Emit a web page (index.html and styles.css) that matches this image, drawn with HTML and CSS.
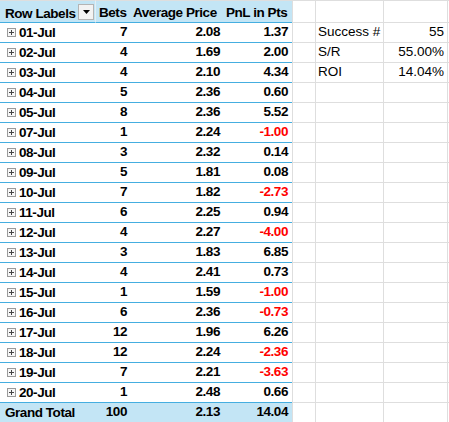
FILE: index.html
```html
<!DOCTYPE html>
<html>
<head>
<meta charset="utf-8">
<link rel="stylesheet" href="styles.css">
</head>
<body>
<div class="sheet">
  <div class="row head">
    <div class="cell a lbl"><span>Row Labels</span><span class="dd"><svg width="7" height="4" viewBox="0 0 7 4"><path d="M0 0H7L3.5 4Z" fill="#000"/></svg></span></div>
    <div class="cell b hl">Bets</div>
    <div class="cell c hl">Average Price</div>
    <div class="cell d hl">PnL in Pts</div>
    <div class="cell e"></div><div class="cell f"></div><div class="cell g"></div><div class="cell h"></div>
  </div>

  <div class="row"><div class="cell a"><i class="pl"></i>01-Jul</div><div class="cell b">7</div><div class="cell c">2.08</div><div class="cell d">1.37</div><div class="cell e"></div><div class="cell f txt">Success #</div><div class="cell g num">55</div><div class="cell h"></div></div>
  <div class="row"><div class="cell a"><i class="pl"></i>02-Jul</div><div class="cell b">4</div><div class="cell c">1.69</div><div class="cell d">2.00</div><div class="cell e"></div><div class="cell f txt">S/R</div><div class="cell g num">55.00%</div><div class="cell h"></div></div>
  <div class="row"><div class="cell a"><i class="pl"></i>03-Jul</div><div class="cell b">4</div><div class="cell c">2.10</div><div class="cell d">4.34</div><div class="cell e"></div><div class="cell f txt">ROI</div><div class="cell g num">14.04%</div><div class="cell h"></div></div>
  <div class="row"><div class="cell a"><i class="pl"></i>04-Jul</div><div class="cell b">5</div><div class="cell c">2.36</div><div class="cell d">0.60</div><div class="cell e"></div><div class="cell f"></div><div class="cell g"></div><div class="cell h"></div></div>
  <div class="row"><div class="cell a"><i class="pl"></i>05-Jul</div><div class="cell b">8</div><div class="cell c">2.36</div><div class="cell d">5.52</div><div class="cell e"></div><div class="cell f"></div><div class="cell g"></div><div class="cell h"></div></div>
  <div class="row"><div class="cell a"><i class="pl"></i>07-Jul</div><div class="cell b">1</div><div class="cell c">2.24</div><div class="cell d neg">-1.00</div><div class="cell e"></div><div class="cell f"></div><div class="cell g"></div><div class="cell h"></div></div>
  <div class="row"><div class="cell a"><i class="pl"></i>08-Jul</div><div class="cell b">3</div><div class="cell c">2.32</div><div class="cell d">0.14</div><div class="cell e"></div><div class="cell f"></div><div class="cell g"></div><div class="cell h"></div></div>
  <div class="row"><div class="cell a"><i class="pl"></i>09-Jul</div><div class="cell b">5</div><div class="cell c">1.81</div><div class="cell d">0.08</div><div class="cell e"></div><div class="cell f"></div><div class="cell g"></div><div class="cell h"></div></div>
  <div class="row"><div class="cell a"><i class="pl"></i>10-Jul</div><div class="cell b">7</div><div class="cell c">1.82</div><div class="cell d neg">-2.73</div><div class="cell e"></div><div class="cell f"></div><div class="cell g"></div><div class="cell h"></div></div>
  <div class="row"><div class="cell a"><i class="pl"></i>11-Jul</div><div class="cell b">6</div><div class="cell c">2.25</div><div class="cell d">0.94</div><div class="cell e"></div><div class="cell f"></div><div class="cell g"></div><div class="cell h"></div></div>
  <div class="row"><div class="cell a"><i class="pl"></i>12-Jul</div><div class="cell b">4</div><div class="cell c">2.27</div><div class="cell d neg">-4.00</div><div class="cell e"></div><div class="cell f"></div><div class="cell g"></div><div class="cell h"></div></div>
  <div class="row"><div class="cell a"><i class="pl"></i>13-Jul</div><div class="cell b">3</div><div class="cell c">1.83</div><div class="cell d">6.85</div><div class="cell e"></div><div class="cell f"></div><div class="cell g"></div><div class="cell h"></div></div>
  <div class="row"><div class="cell a"><i class="pl"></i>14-Jul</div><div class="cell b">4</div><div class="cell c">2.41</div><div class="cell d">0.73</div><div class="cell e"></div><div class="cell f"></div><div class="cell g"></div><div class="cell h"></div></div>
  <div class="row"><div class="cell a"><i class="pl"></i>15-Jul</div><div class="cell b">1</div><div class="cell c">1.59</div><div class="cell d neg">-1.00</div><div class="cell e"></div><div class="cell f"></div><div class="cell g"></div><div class="cell h"></div></div>
  <div class="row"><div class="cell a"><i class="pl"></i>16-Jul</div><div class="cell b">6</div><div class="cell c">2.36</div><div class="cell d neg">-0.73</div><div class="cell e"></div><div class="cell f"></div><div class="cell g"></div><div class="cell h"></div></div>
  <div class="row"><div class="cell a"><i class="pl"></i>17-Jul</div><div class="cell b">12</div><div class="cell c">1.96</div><div class="cell d">6.26</div><div class="cell e"></div><div class="cell f"></div><div class="cell g"></div><div class="cell h"></div></div>
  <div class="row"><div class="cell a"><i class="pl"></i>18-Jul</div><div class="cell b">12</div><div class="cell c">2.24</div><div class="cell d neg">-2.36</div><div class="cell e"></div><div class="cell f"></div><div class="cell g"></div><div class="cell h"></div></div>
  <div class="row"><div class="cell a"><i class="pl"></i>19-Jul</div><div class="cell b">7</div><div class="cell c">2.21</div><div class="cell d neg">-3.63</div><div class="cell e"></div><div class="cell f"></div><div class="cell g"></div><div class="cell h"></div></div>
  <div class="row"><div class="cell a"><i class="pl"></i>20-Jul</div><div class="cell b">1</div><div class="cell c">2.48</div><div class="cell d">0.66</div><div class="cell e"></div><div class="cell f"></div><div class="cell g"></div><div class="cell h"></div></div>
  <div class="row total"><div class="cell a gt">Grand Total</div><div class="cell b">100</div><div class="cell c">2.13</div><div class="cell d">14.04</div><div class="cell e"></div><div class="cell f"></div><div class="cell g"></div><div class="cell h"></div></div>
</div>
</body>
</html>
```

FILE: styles.css
```css
html, body {
  margin: 0;
  padding: 0;
  background: #fff;
}
.sheet {
  width: 449px;
  height: 422px;
  overflow: hidden;
  font-family: "Liberation Sans", Arial, sans-serif;
  font-size: 13.5px;
  color: #000;
}
.row {
  display: flex;
  height: 20px;
}
.row.head {
  height: 23px;
}
.cell {
  box-sizing: border-box;
  height: 100%;
  flex: none;
  line-height: 18px;
  white-space: nowrap;
  overflow: hidden;
  border-bottom: 1px solid #dedede;
}
.head .cell {
  border-top: 1px solid #dedede;
  line-height: 19px;
  padding-top: 2px;
}
.a, .b, .c, .d {
  font-weight: bold;
  font-size: 13.5px;
  letter-spacing: -0.45px;
  border-bottom-color: #45aee0;
}
.head .a, .head .b, .head .c, .head .d,
.total .a, .total .b, .total .c, .total .d {
  background: #c3e5f5;
}
.a { width: 96px; padding-left: 7px; display: flex; align-items: center; }
.b { width: 33px; text-align: right; padding-right: 2px; }
.c { width: 94px; text-align: right; padding-right: 3px; }
.d { width: 69px; text-align: right; padding-right: 4px; }
.e { width: 24px; border-left: 1px solid #dedede; border-right: 1px solid #dedede; }
.f { width: 68px; border-right: 1px solid #dedede; }
.g { width: 64px; border-right: 1px solid #dedede; }
.h { width: 1px; flex: 1; }
.head .hl { text-align: left; padding-right: 0; }
.head .b { padding-left: 3px; }
.head .c { padding-left: 4px; }
.head .d { padding-left: 3px; }
.head .lbl {
  padding-left: 5px;
  padding-right: 1px;
  padding-top: 0;
  justify-content: space-between;
  border-right: 1px solid #e4eef3;
}
.lbl span:first-child { padding-top: 3px; }
.gt { padding-left: 5px; }
.dd {
  box-sizing: border-box;
  width: 16px;
  height: 16px;
  border: 1px solid #b4b4b4;
  background: #f3f3f3;
  display: flex;
  align-items: center;
  justify-content: center;
}
.dd svg { display: block; }
.pl {
  box-sizing: border-box;
  width: 9px;
  height: 9px;
  margin-right: 3px;
  border: 1px solid #9a9a9a;
  background: #f6f6f6;
  position: relative;
}
.pl::before, .pl::after {
  content: "";
  position: absolute;
  background: #444;
}
.pl::before { left: 1px; top: 3px; width: 5px; height: 1px; }
.pl::after { left: 3px; top: 1px; width: 1px; height: 5px; }
.neg { color: #ff0000; }
.txt { padding-left: 2px; }
.num { text-align: right; padding-right: 3px; }
```
